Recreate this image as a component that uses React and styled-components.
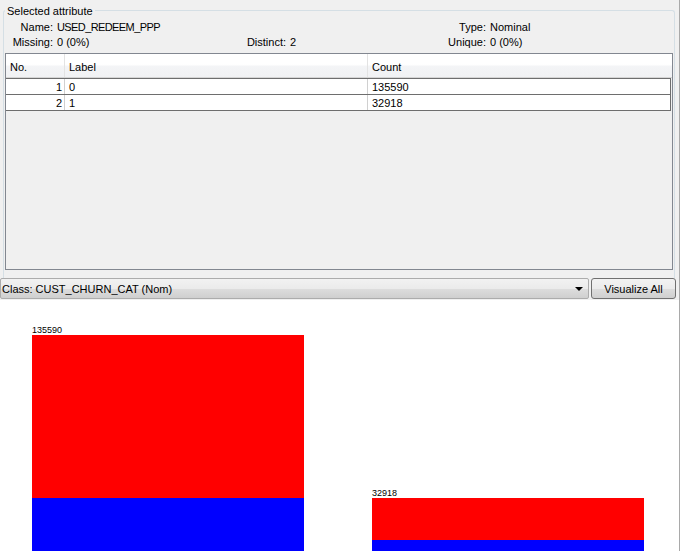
import React from "react";
import styled, { createGlobalStyle } from "styled-components";

const GlobalStyle = createGlobalStyle`
  html, body {
    margin: 0;
    padding: 0;
    background: #ffffff;
  }
  body {
    font-family: "Liberation Sans", Arial, sans-serif;
    font-size: 11px;
    color: #000;
    overflow: hidden;
  }
  * {
    box-sizing: border-box;
  }
`;

const rows = [
  { no: 1, label: "0", count: "135590" },
  { no: 2, label: "1", count: "32918" },
];

// bars of the class histogram: total height is the count, blue part is the second class
const bars = [
  { x: 32, top: 35, split: 198, label: "135590" },
  { x: 372, top: 198, split: 240, label: "32918" },
];

const App = () => {
  return (
    <>
      <GlobalStyle />
      <Window>
        <TopPanel>
          <GroupBox>
            <GroupTitle>Selected attribute</GroupTitle>
            <InfoGrid>
              <InfoCell $labelWidth={48}>
                <InfoLabel>Name:</InfoLabel>
                <InfoValue $tight>USED_REDEEM_PPP</InfoValue>
              </InfoCell>
              <InfoCell />
              <InfoCell $labelWidth={74}>
                <InfoLabel>Type:</InfoLabel>
                <InfoValue>Nominal</InfoValue>
              </InfoCell>
              <InfoCell $labelWidth={48}>
                <InfoLabel>Missing:</InfoLabel>
                <InfoValue>0 (0%)</InfoValue>
              </InfoCell>
              <InfoCell $labelWidth={54}>
                <InfoLabel>Distinct:</InfoLabel>
                <InfoValue>2</InfoValue>
              </InfoCell>
              <InfoCell $labelWidth={74}>
                <InfoLabel>Unique:</InfoLabel>
                <InfoValue>0 (0%)</InfoValue>
              </InfoCell>
            </InfoGrid>
            <Table>
              <HeaderRow>
                <HeadCell>No.</HeadCell>
                <HeadCell>Label</HeadCell>
                <HeadCell>Count</HeadCell>
              </HeaderRow>
              {rows.map((r) => (
                <Row key={r.no}>
                  <Cell $right>{r.no}</Cell>
                  <Cell>{r.label}</Cell>
                  <Cell>{r.count}</Cell>
                </Row>
              ))}
            </Table>
          </GroupBox>
          <Controls>
            <Combo>
              <span>Class: CUST_CHURN_CAT (Nom)</span>
              <Arrow />
            </Combo>
            <Button>Visualize All</Button>
          </Controls>
        </TopPanel>
        <Plot>
          <svg width="679" height="252" viewBox="0 0 679 252">
            {bars.map((b) => (
              <g key={b.label}>
                <text
                  x={b.x}
                  y={b.top - 2}
                  fontSize="9"
                  fontFamily="Liberation Sans, sans-serif"
                  fill="#000"
                >
                  {b.label}
                </text>
                <rect x={b.x} y={b.top} width="272" height={b.split - b.top} fill="#ff0000" />
                <rect x={b.x} y={b.split} width="272" height="80" fill="#0000ff" />
              </g>
            ))}
          </svg>
        </Plot>
      </Window>
    </>
  );
};

const Window = styled.div`
  width: 680px;
  height: 551px;
  border-right: 1px solid #a9a9a9;
  display: flex;
  flex-direction: column;
  overflow: hidden;
`;

const TopPanel = styled.div`
  background: #f0f0f0;
  padding: 0 0 1px 0;
  display: flex;
  flex-direction: column;
`;

const GroupBox = styled.div`
  position: relative;
  margin: 10px 4px 0 3px;
  border: 1px solid #d5dfe5;
  border-bottom: none;
  border-radius: 3px 3px 0 0;
  padding: 8px 0 8px 1px;
`;

const GroupTitle = styled.div`
  position: absolute;
  top: -7px;
  left: 1px;
  padding: 0 2px;
  background: #f0f0f0;
  line-height: 14px;
`;

const InfoGrid = styled.div`
  display: grid;
  grid-template-columns: 227px 180px 1fr;
  grid-auto-rows: 15px;
  margin-bottom: 4px;
`;

const InfoCell = styled.div`
  display: flex;
  align-items: center;
  gap: 4px;
  & > :first-child {
    width: ${(p) => p.$labelWidth || 0}px;
  }
`;

const InfoLabel = styled.span`
  text-align: right;
  white-space: nowrap;
`;

const InfoValue = styled.span`
  white-space: nowrap;
  letter-spacing: ${(p) => (p.$tight ? "-0.6px" : "0")};
`;

const Table = styled.div`
  height: 217px;
  border: 1px solid #828790;
  background: #f0f0f0;
  margin-right: 1px;
`;

const columns = "59px 303px 1fr";

const HeaderRow = styled.div`
  display: grid;
  grid-template-columns: ${columns};
  height: 24px;
  background: linear-gradient(#ffffff 0%, #ffffff 45%, #f3f4f6 55%, #f1f2f4 100%);
  border-bottom: 1px solid #d5d5d5;
`;

const HeadCell = styled.div`
  display: flex;
  align-items: center;
  padding: 2px 0 0 4px;
  border-right: 1px solid #e3e3e3;
  &:last-child {
    border-right: none;
  }
`;

const Row = styled.div`
  display: grid;
  grid-template-columns: ${columns};
  height: 17px;
  background: #ffffff;
  border: 1px solid #6e6e6e;
  border-left: none;
  margin-right: 1px;
  & + & {
    border-top: none;
    height: 16px;
  }
`;

const Cell = styled.div`
  display: flex;
  align-items: center;
  justify-content: ${(p) => (p.$right ? "flex-end" : "flex-start")};
  padding: 0 2px 0 4px;
  border-right: 1px solid #d0d0d0;
  &:last-child {
    border-right: none;
  }
`;

const Controls = styled.div`
  display: flex;
  gap: 2px;
  padding: 0 3px 0 0;
  height: 21px;
`;

const Combo = styled.div`
  flex: 1;
  display: flex;
  align-items: center;
  justify-content: space-between;
  padding: 0 5px 0 1px;
  border: 1px solid #acacac;
  border-radius: 2px;
  background: linear-gradient(#f2f2f2 0%, #ebebeb 50%, #dddddd 51%, #cfcfcf 100%);
`;

const Arrow = styled.span`
  width: 0;
  height: 0;
  border-left: 4px solid transparent;
  border-right: 4px solid transparent;
  border-top: 4px solid #000;
`;

const Button = styled.button`
  width: 85px;
  height: 21px;
  font-family: inherit;
  font-size: 11px;
  color: #000;
  border: 1px solid #707070;
  border-radius: 3px;
  background: linear-gradient(#f2f2f2 0%, #ebebeb 50%, #dddddd 51%, #cfcfcf 100%);
  padding: 0;
`;

const Plot = styled.div`
  flex: 1;
  background: #ffffff;
  svg {
    display: block;
  }
`;

export default App;
